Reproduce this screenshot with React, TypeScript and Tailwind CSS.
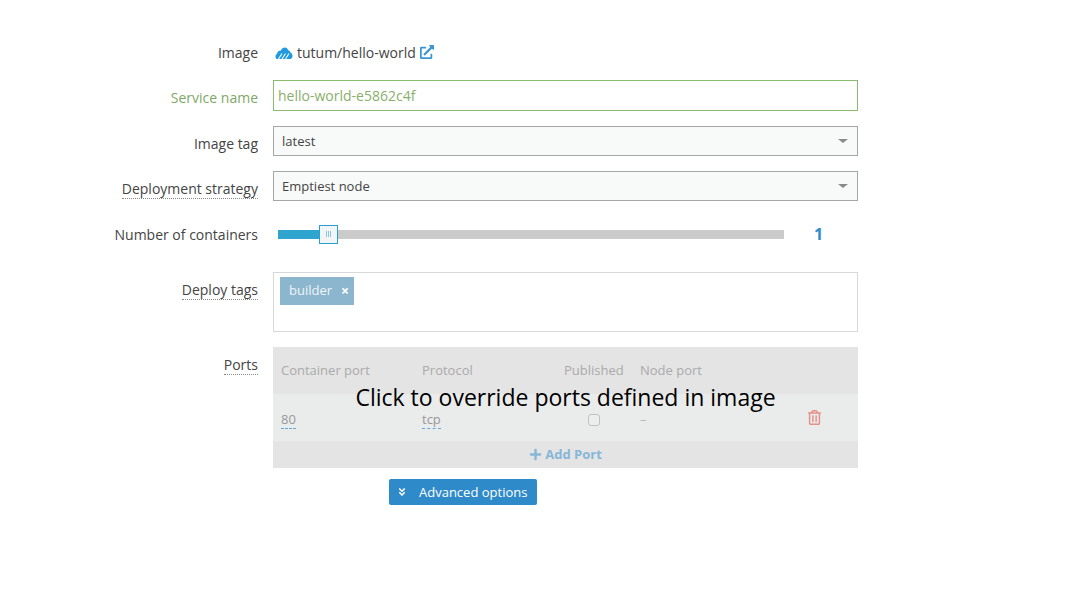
import React from "react";
import { FaAngleDoubleDown, FaExternalLinkAlt, FaPlus, FaRegTrashAlt } from "react-icons/fa";

const Caret = () => (
  <span className="w-0 h-0 border-l-[5px] border-r-[5px] border-t-[4px] border-l-transparent border-r-transparent border-t-[#8a8a8a]" />
);

const Label = ({ text, dotted, green }: { text: string; dotted?: boolean; green?: boolean }) => (
  <div className="w-[258px] shrink-0 flex justify-end mr-[15px]">
    <span
      className={`text-sm leading-[19px] ${green ? "text-[#7fa868]" : "text-[#444]"} ${
        dotted ? "border-b border-dotted border-[#888]" : ""
      }`}
    >
      {text}
    </span>
  </div>
);

const Select = ({ value }: { value: string }) => (
  <div className="w-[585px] h-[30px] border border-[#a5a5a5] bg-[#f8f9f9] flex items-center justify-between pl-2 pr-[9px]">
    <span className="text-[13px] text-[#444] pt-[2px]">{value}</span>
    <Caret />
  </div>
);

const TutumLogo = () => (
  <svg width="18" height="14" viewBox="0 0 18 14" className="shrink-0">
    <path
      d="M2 13 C0 13 0 8.500 2 8 C2 5.500 4 4.500 6 4.500 C7 0.500 12.500 0.500 13 4 C14 4.500 15 5 15.500 6.500 C18 7 18.500 13 15 13 Z"
      fill="#1f9ade"
    />
    <path d="M3.500 13 L7 7.500 M7 13 L10.500 7.500 M10.500 13 L14 7.500" stroke="#fff" strokeWidth="1.100" />
  </svg>
);

export default function App() {
  return (
    <div className="w-[1066px] h-[604px] bg-white pt-[43px] font-['Open_Sans',sans-serif] overflow-hidden">
      <div className="flex items-start h-5 mb-[17px]">
        <Label text="Image" />
        <div className="flex items-center ml-[2px] h-5">
          <TutumLogo />
          <span className="text-sm text-[#444] ml-[4px]">tutum/hello-world</span>
          <FaExternalLinkAlt size={14} className="text-[#3a95d3] ml-[4px] -mt-[3px]" />
        </div>
      </div>

      <div className="flex items-start mb-[15px]">
        <div className="pt-2">
          <Label text="Service name" green />
        </div>
        <div className="w-[585px] h-[31px] border border-[#8cba6e] bg-white flex items-center pl-1">
          <span className="text-sm text-[#8aae6c]">hello-world-e5862c4f</span>
        </div>
      </div>

      <div className="flex items-start mb-[15px]">
        <div className="pt-2">
          <Label text="Image tag" />
        </div>
        <Select value="latest" />
      </div>

      <div className="flex items-start mb-[23px]">
        <div className="pt-2">
          <Label text="Deployment strategy" dotted />
        </div>
        <Select value="Emptiest node" />
      </div>

      <div className="flex items-center h-[20px] mb-[28px]">
        <Label text="Number of containers" />
        <div className="w-[585px] flex items-center pl-[5px]">
          <div className="relative w-[506px] h-[9px] bg-[#cbcbcb]">
            <div className="w-[45px] h-full bg-[#2fa4cf]" />
            <div className="absolute left-[41px] top-[-5px] w-[19px] h-[19px] border border-[#2a9fd0] bg-[#f1f5f6] flex items-center justify-center gap-px">
              <span className="w-px h-[6px] bg-[#8cc5e0]" />
              <span className="w-px h-[6px] bg-[#8cc5e0]" />
              <span className="w-px h-[6px] bg-[#8cc5e0]" />
            </div>
          </div>
          <span className="ml-[30px] text-base leading-none font-bold text-[#2b8ccb]">1</span>
        </div>
      </div>

      <div className="flex items-start mb-[15px]">
        <div className="pt-2">
          <Label text="Deploy tags" dotted />
        </div>
        <div className="w-[585px] h-[60px] border border-[#d8d8d8] bg-white pt-1 pl-[6px]">
          <div className="inline-flex items-center h-7 bg-[#8cb6ce] pl-[9px] pr-[5px] text-white">
            <span className="text-[13px] text-[#eef4f7]">builder</span>
            <span className="ml-[9px] text-sm leading-none font-bold">×</span>
          </div>
        </div>
      </div>

      <div className="flex items-start mb-[11px]">
        <div className="pt-2">
          <Label text="Ports" dotted />
        </div>
        <div className="relative w-[585px] h-[121px] text-[13px] text-[#aaa]">
          <div className="flex items-end h-[47px] pb-[14px] bg-[#e4e4e4]">
            <span className="w-[141px] pl-2">Container port</span>
            <span className="w-[142px] pl-2">Protocol</span>
            <span className="w-[83px] pl-2">Published</span>
            <span className="pl-px">Node port</span>
          </div>
          <div className="flex items-center h-[47px] bg-[#eaebeb]">
            <div className="w-[141px] pl-2 pt-[4px]">
              <span className="text-[#999] border-b border-dashed border-[#5fa8dc]">80</span>
            </div>
            <div className="w-[142px] pl-2 pt-[4px]">
              <span className="text-[#999] border-b border-dashed border-[#5fa8dc]">tcp</span>
            </div>
            <div className="w-[84px] pl-[32px] pt-[4px]">
              <div className="w-[12px] h-[12px] rounded-[3px] border border-[#c9bdbd] bg-[#eceded]" />
            </div>
            <span className="w-[167px] pt-[4px] text-[#bbb]">–</span>
            <FaRegTrashAlt size={15} className="text-[#e58f86]" />
          </div>
          <div className="flex items-center justify-center gap-[3px] h-[27px] bg-[#e4e4e4] text-[#86b6d8] font-bold">
            <FaPlus size={13} />
            <span>Add Port</span>
          </div>
          <div className="absolute inset-x-0 top-[34px] text-center text-[23px] leading-[33px] text-black">
            Click to override ports defined in image
          </div>
        </div>
      </div>

      <div className="flex">
        <button className="ml-[389px] w-[148px] h-[26px] rounded-[2px] bg-[#2f8ac9] text-white text-[13px] flex items-center pl-[8px]">
          <FaAngleDoubleDown size={10} />
          <span className="ml-[12px] pt-px">Advanced options</span>
        </button>
      </div>
    </div>
  );
}
